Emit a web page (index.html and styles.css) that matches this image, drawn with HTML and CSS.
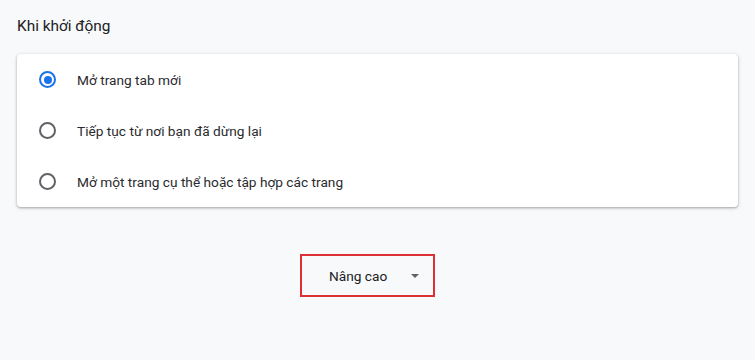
FILE: index.html
```html
<!DOCTYPE html>
<html lang="vi">
<head>
<meta charset="utf-8">
<title>Khi khởi động</title>
<link rel="stylesheet" href="styles.css">
</head>
<body>

<section class="startup">
  <h2 class="section-title">Khi khởi động</h2>

  <div class="card">
    <label class="row">
      <span class="radio checked"></span>
      <span class="label-text">Mở trang tab mới</span>
    </label>
    <label class="row">
      <span class="radio"></span>
      <span class="label-text">Tiếp tục từ nơi bạn đã dừng lại</span>
    </label>
    <label class="row">
      <span class="radio"></span>
      <span class="label-text">Mở một trang cụ thể hoặc tập hợp các trang</span>
    </label>
  </div>
</section>

<div class="advanced">
  <button class="advanced-btn">
    <span>Nâng cao</span>
    <span class="arrow"></span>
  </button>
</div>

</body>
</html>
```

FILE: styles.css
```css
body {
  margin: 0;
  background-color: #f8f9fa;
  font-family: Roboto, "Liberation Sans", Arial, sans-serif;
  color: #202124;
}

.startup {
  padding: 17px 17px 0 17px;
}

.section-title {
  margin: 0 0 19px 0;
  font-size: 15.4px;
  font-weight: 400;
  line-height: 18px;
  color: #202124;
}

.card {
  background-color: white;
  border-radius: 4px;
  box-shadow: 0 1px 2px rgba(60, 64, 67, 0.3), 0 1px 3px 1px rgba(60, 64, 67, 0.15);
}

.row {
  display: flex;
  align-items: center;
  height: 51px;
  padding-left: 22px;
  font-size: 13.7px;
  color: #2a2b2e;
}

.radio {
  box-sizing: border-box;
  width: 17px;
  height: 17px;
  border: 2px solid #5f6368;
  border-radius: 50%;
  margin-right: 21px;
  display: flex;
  align-items: center;
  justify-content: center;
}

.radio.checked {
  border-color: #1a73e8;
}

.radio.checked::after {
  content: "";
  width: 8px;
  height: 8px;
  border-radius: 50%;
  background-color: #1a73e8;
}

.advanced {
  padding: 47px 0 0 300px;
}

.advanced-btn {
  box-sizing: border-box;
  width: 135px;
  height: 43px;
  border: 2px solid #dc2f36;
  background: transparent;
  display: flex;
  align-items: center;
  padding: 0 0 0 27px;
  font-family: Roboto, "Liberation Sans", Arial, sans-serif;
  font-size: 13.7px;
  color: #202124;
}

.arrow {
  margin-left: 24px;
  width: 0;
  height: 0;
  border-left: 4px solid transparent;
  border-right: 4px solid transparent;
  border-top: 4px solid #5f6368;
}
```
